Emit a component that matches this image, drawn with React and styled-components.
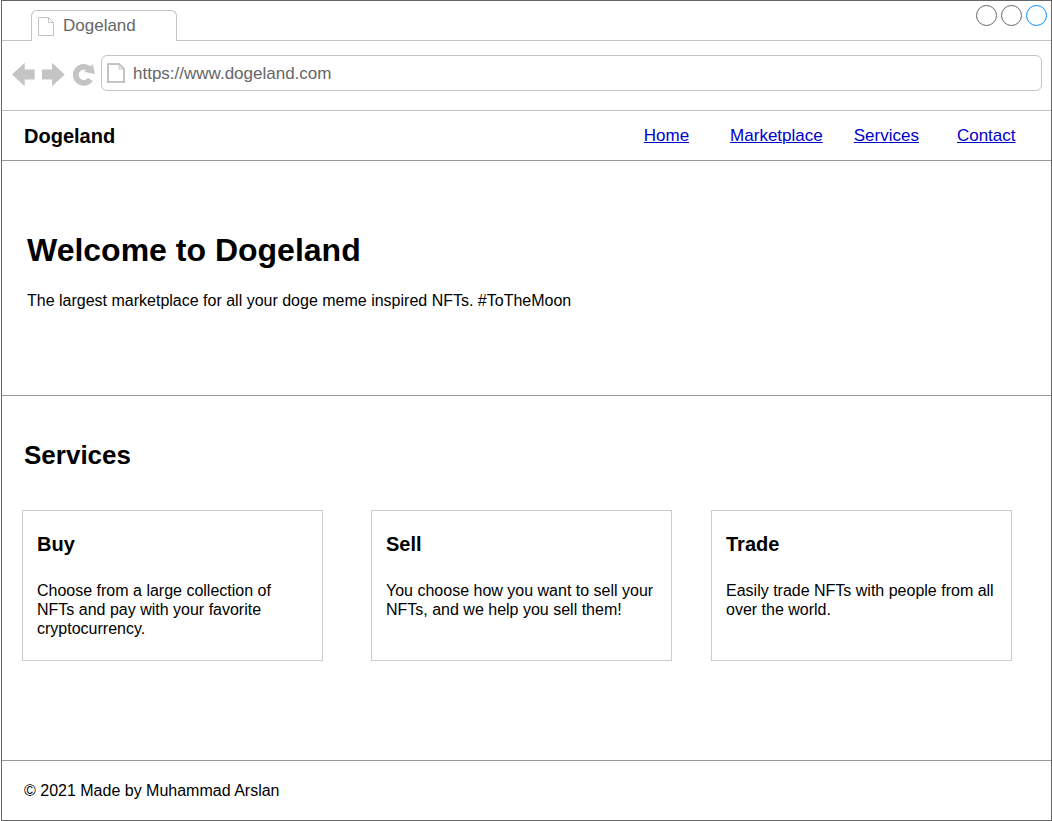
import React from "react";
import styled, { createGlobalStyle } from "styled-components";

const GlobalStyle = createGlobalStyle`
  *, *::before, *::after { box-sizing: border-box; }
  body { margin: 0; background: #fff; overflow: hidden; }
  h1, h2, h3, p { margin: 0; }
`;

const Frame = styled.div`
  display: flex;
  flex-direction: column;
  width: 1051px;
  height: 821px;
  margin-left: 1px;
  border: 1px solid #666;
  background: #fff;
  color: #000;
  font-family: "Liberation Sans", Arial, sans-serif;
  font-size: 16px;
  line-height: 19px;
`;

const TabStrip = styled.div`
  display: flex;
  align-items: flex-end;
  justify-content: space-between;
  flex: none;
  height: 40px;
  padding: 0 4px 0 29px;
  border-bottom: 1px solid #c4c4c4;
`;

const Tab = styled.div`
  display: flex;
  align-items: center;
  gap: 8px;
  width: 146px;
  height: 31px;
  margin-bottom: -1px;
  padding-left: 6px;
  border: 1px solid #c4c4c4;
  border-bottom: 0;
  border-radius: 6px 6px 0 0;
  background: #fff;
  color: #666;
  font-size: 17px;
`;

const TabTitle = styled.span`
  padding-bottom: 2px;
`;

const WindowControls = styled.div`
  display: flex;
  gap: 4px;
  align-self: flex-start;
  padding-top: 4px;
`;

const Control = styled.span`
  width: 21px;
  height: 21px;
  border: 1px solid ${(p) => (p.$active ? "#008cff" : "#666")};
  border-radius: 50%;
`;

const Toolbar = styled.div`
  display: flex;
  align-items: center;
  flex: none;
  height: 70px;
  padding: 0 9px 6px 10px;
  border-bottom: 1px solid #c4c4c4;
`;

const NavIcons = styled.svg`
  flex: none;
  display: block;
  margin: 4px 4px 0 0;
`;

const PageIcon = styled.svg`
  flex: none;
  display: block;
`;

const AddressBar = styled.div`
  display: flex;
  align-items: center;
  gap: 8px;
  flex: 1;
  height: 36px;
  padding: 1px 0 0 5px;
  border: 1px solid #c4c4c4;
  border-radius: 6px;
  color: #666;
  font-size: 17px;
`;

const SiteHeader = styled.header`
  display: flex;
  align-items: center;
  justify-content: space-between;
  flex: none;
  height: 50px;
  padding: 0 35.5px 0 22px;
  border-bottom: 1px solid #999;
`;

const Brand = styled.div`
  padding-top: 2px;
  font-size: 20px;
  font-weight: 700;
`;

const Nav = styled.nav`
  display: flex;
`;

const NavLink = styled.a`
  margin-left: ${(p) => p.$gap}px;
  color: #0000cc;
  font-size: 17px;
  text-decoration: underline;
`;

const Hero = styled.section`
  flex: none;
  height: 235px;
  padding: 71px 25px 0;
  border-bottom: 1px solid #999;
`;

const HeroTitle = styled.h1`
  margin-bottom: 22px;
  font-size: 32px;
  line-height: 37px;
`;

const Services = styled.section`
  flex: none;
  height: 365px;
  padding: 44px 20px 0;
  border-bottom: 1px solid #999;
`;

const SectionTitle = styled.h2`
  margin: 0 0 40px 2px;
  font-size: 26px;
  line-height: 30px;
`;

const CardRow = styled.div`
  display: flex;
`;

const Card = styled.article`
  width: 301px;
  height: 151px;
  margin-left: ${(p) => p.$gap}px;
  padding: 22px 14px 0;
  border: 1px solid #ccc;
`;

const CardTitle = styled.h3`
  margin-bottom: 25px;
  font-size: 20px;
  line-height: 23px;
`;

const Footer = styled.footer`
  display: flex;
  align-items: center;
  flex: 1;
  padding-left: 22px;
`;

const links = [
  { label: "Home", gap: 0 },
  { label: "Marketplace", gap: 41 },
  { label: "Services", gap: 31 },
  { label: "Contact", gap: 38 },
];

const services = [
  { title: "Buy", gap: 0, text: "Choose from a large collection of NFTs and pay with your favorite cryptocurrency." },
  { title: "Sell", gap: 48, text: "You choose how you want to sell your NFTs, and we help you sell them!" },
  { title: "Trade", gap: 39, text: "Easily trade NFTs with people from all over the world." },
];

export default function App() {
  return (
    <Frame>
      <GlobalStyle />
      <TabStrip>
        <Tab>
          <PageIcon width="17" height="20" viewBox="0 0 17 20" fill="none" stroke="#c4c4c4">
            <path d="M.5 1.5H10.5L15.5 6.5V19.5H.5ZM10.5 1.5V6.5H15.5" />
          </PageIcon>
          <TabTitle>Dogeland</TabTitle>
        </Tab>
        <WindowControls>
          <Control />
          <Control />
          <Control $active />
        </WindowControls>
      </TabStrip>
      <Toolbar>
        <NavIcons width="85" height="26" viewBox="0 0 85 26" fill="#c4c4c4">
          <path d="M0 12.5L12.7 .7V7.5H22.7V17.5H12.7V24.3Z" />
          <path d="M52.7 12.5L40 .7V7.5H30V17.5H40V24.3Z" />
          <path d="M77 6.8A8 8 0 1 0 78.4 17.4" fill="none" stroke="#c4c4c4" strokeWidth="5.8" />
          <path d="M80.9 2.2L82.9 11.9L72.2 9.8Z" />
        </NavIcons>
        <AddressBar>
          <PageIcon width="18" height="20" viewBox="0 0 18 20" fill="none" stroke="#c4c4c4" strokeWidth="2">
            <path d="M1 1H12L17 6V19H1Z" />
            <path d="M12 1V6H17" strokeWidth="1" />
          </PageIcon>
          https://www.dogeland.com
        </AddressBar>
      </Toolbar>
      <SiteHeader>
        <Brand>Dogeland</Brand>
        <Nav>
          {links.map((l) => (
            <NavLink key={l.label} href="#" $gap={l.gap}>{l.label}</NavLink>
          ))}
        </Nav>
      </SiteHeader>
      <Hero>
        <HeroTitle>Welcome to Dogeland</HeroTitle>
        <p>The largest marketplace for all your doge meme inspired NFTs. #ToTheMoon</p>
      </Hero>
      <Services>
        <SectionTitle>Services</SectionTitle>
        <CardRow>
          {services.map((s) => (
            <Card key={s.title} $gap={s.gap}>
              <CardTitle>{s.title}</CardTitle>
              <p>{s.text}</p>
            </Card>
          ))}
        </CardRow>
      </Services>
      <Footer>© 2021 Made by Muhammad Arslan</Footer>
    </Frame>
  );
}
